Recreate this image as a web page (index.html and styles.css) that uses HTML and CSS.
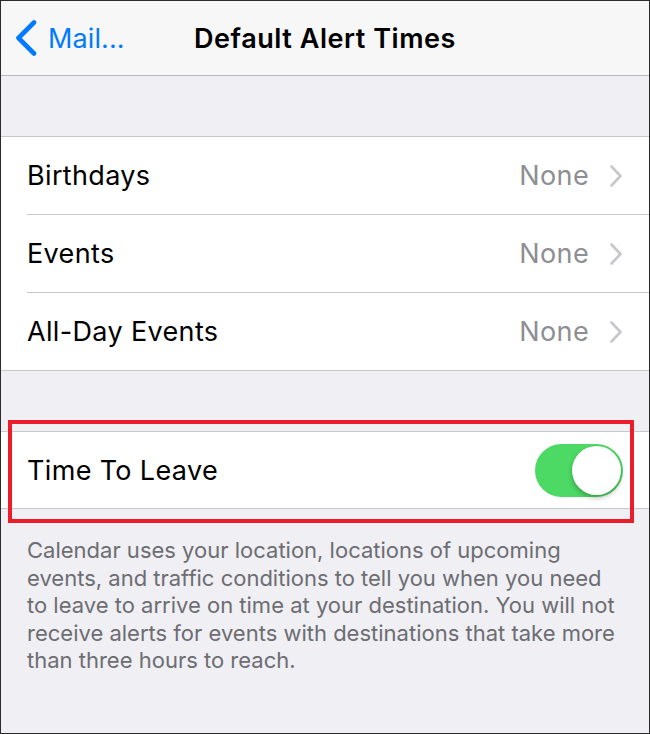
FILE: index.html
```html
<!DOCTYPE html>
<html lang="en">
<head>
<meta charset="utf-8">
<title>Default Alert Times</title>
<link rel="stylesheet" href="styles.css">
</head>
<body>
<div class="frame">
  <header class="nav">
    <div class="nav-back">
      <svg class="back-chevron" width="24" height="36" viewBox="0 0 24 36" aria-hidden="true">
        <path d="M20 2.5 L4.5 18 L20 33.5" fill="none" stroke="#007aff" stroke-width="4.6" stroke-linecap="round" stroke-linejoin="round"/>
      </svg>
      <span class="back-label">Mail...</span>
    </div>
    <h1 class="nav-title">Default Alert Times</h1>
    <div class="nav-spacer"></div>
  </header>

  <section class="group">
    <div class="row">
      <div class="row-body">
        <span class="row-label">Birthdays</span>
        <span class="row-value">None</span>
        <svg class="row-chevron" width="14" height="24" viewBox="0 0 14 24" aria-hidden="true"><path d="M2.5 2.5 L11.5 12 L2.5 21.5" fill="none" stroke="#c7c7cc" stroke-width="2.6" stroke-linecap="round" stroke-linejoin="round"/></svg>
      </div>
    </div>
    <div class="row">
      <div class="row-body sep">
        <span class="row-label">Events</span>
        <span class="row-value">None</span>
        <svg class="row-chevron" width="14" height="24" viewBox="0 0 14 24" aria-hidden="true"><path d="M2.5 2.5 L11.5 12 L2.5 21.5" fill="none" stroke="#c7c7cc" stroke-width="2.6" stroke-linecap="round" stroke-linejoin="round"/></svg>
      </div>
    </div>
    <div class="row">
      <div class="row-body sep">
        <span class="row-label">All-Day Events</span>
        <span class="row-value">None</span>
        <svg class="row-chevron" width="14" height="24" viewBox="0 0 14 24" aria-hidden="true"><path d="M2.5 2.5 L11.5 12 L2.5 21.5" fill="none" stroke="#c7c7cc" stroke-width="2.6" stroke-linecap="round" stroke-linejoin="round"/></svg>
      </div>
    </div>
  </section>

  <section class="group group-leave">
    <div class="row row-short">
      <div class="row-body">
        <span class="row-label">Time To Leave</span>
        <span class="switch"><span class="knob"></span></span>
      </div>
    </div>
    <div class="highlight"></div>
  </section>

  <p class="footer-note">Calendar uses your location, locations of upcoming events, and traffic conditions to tell you when you need to leave to arrive on time at your destination. You will not receive alerts for events with destinations that take more than three hours to reach.</p>
</div>
</body>
</html>
```

FILE: styles.css
```css
html, body {
  margin: 0;
  padding: 0;
}

body {
  width: 650px;
  height: 734px;
  font-family: Inter, "Liberation Sans", Arial, sans-serif;
  -webkit-font-smoothing: antialiased;
}

.frame {
  box-sizing: border-box;
  width: 650px;
  height: 734px;
  border: 1px solid #2b2b2b;
  background: #efeff4;
  overflow: hidden;
}

.nav {
  height: 74px;
  background: #f7f7f8;
  border-bottom: 1px solid #b9b9bd;
  display: grid;
  grid-template-columns: 1fr auto 1fr;
  align-items: center;
}

.nav-back {
  display: flex;
  align-items: center;
  padding-left: 13px;
}

.back-chevron {
  display: block;
}

.back-label {
  margin-left: 10px;
  font-size: 27px;
  color: #007aff;
  letter-spacing: 0.1px;
}

.nav-title {
  margin: 0;
  font-size: 27px;
  font-weight: 600;
  color: #000;
  letter-spacing: 0.55px;
}

.group {
  margin-top: 60px;
  background: #fff;
  border-top: 1px solid #c8c7cc;
  border-bottom: 1px solid #c8c7cc;
}

.group-leave {
  position: relative;
}

.row {
  padding-left: 26px;
}

.row-body {
  height: 77px;
  display: flex;
  align-items: center;
  padding-right: 26px;
}

.row-body.sep {
  border-top: 1px solid #c8c7cc;
}

.row-short .row-body {
  height: 76px;
}

.row-label {
  flex: 1;
  font-size: 27px;
  letter-spacing: 0.35px;
  color: #000;
}

.row-value {
  font-size: 27px;
  letter-spacing: 0.35px;
  color: #8e8e93;
  margin-right: 20px;
}

.row-chevron {
  display: block;
}

.switch {
  position: relative;
  width: 88px;
  height: 53px;
  border-radius: 27px;
  background: #4cd964;
}

.knob {
  position: absolute;
  top: 2px;
  right: 2px;
  width: 49px;
  height: 49px;
  border-radius: 50%;
  background: #fff;
  box-shadow: 0 3px 5px rgba(0, 0, 0, 0.25), 0 0 0 0.5px rgba(0, 0, 0, 0.06);
}

.highlight {
  position: absolute;
  left: 7px;
  top: -12px;
  width: 626px;
  height: 103px;
  box-sizing: border-box;
  border: 4px solid #ec1c2b;
  pointer-events: none;
}

.footer-note {
  margin: 0;
  padding: 28px 26px 0 26px;
  font-size: 22px;
  line-height: 27.5px;
  color: #6d6d72;
}
```
